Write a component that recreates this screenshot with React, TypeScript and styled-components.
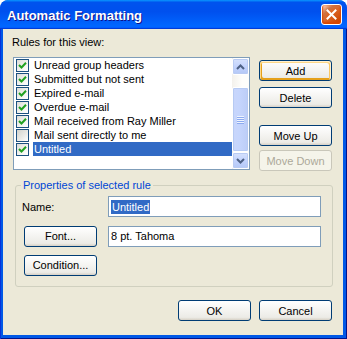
import React from 'react';
import styled, { createGlobalStyle, css } from 'styled-components';

const Global = createGlobalStyle`
  html, body { margin: 0; padding: 0; background: #ffffff; }
  body { font-family: "Liberation Sans", Arial, sans-serif; font-size: 11px; }
  * { box-sizing: border-box; }
`;

const Window = styled.div`
  width: 347px;
  height: 339px;
  display: flex;
  flex-direction: column;
  background: #0058e6;
  border-radius: 8px 8px 0 0;
  overflow: hidden;
`;

const TitleBar = styled.div`
  height: 29px;
  flex: none;
  display: flex;
  align-items: center;
  justify-content: space-between;
  padding: 0 5px 0 7px;
  border-radius: 8px 8px 0 0;
  background: linear-gradient(180deg, #0997ff, #0053ee 8%, #0050ee 40%, #0066ff 88%, #0066ff 93%, #005bff 95%, #003dd7 96%, #003dd7);
`;

const Title = styled.span`
  font-family: "Liberation Sans", Arial, sans-serif;
  font-weight: bold;
  font-size: 13px;
  color: #ffffff;
  text-shadow: 1px 1px #0f1089;
  letter-spacing: 0;
  padding-top: 1px;
`;

const CloseButton = styled.div`
  width: 21px;
  height: 21px;
  border: 1px solid #ffffff;
  border-radius: 3px;
  display: flex;
  align-items: center;
  justify-content: center;
  background: radial-gradient(circle at 90% 90%, #cc4600 0, #dc6527 55%, #cd7546 70%, #ffccb2 90%, #ffffff 100%);
  box-shadow: inset 0 -1px 2px 1px #da4600;
`;

const Frame = styled.div`
  flex: 1;
  display: flex;
  padding: 0 4px 4px 3px;
  box-shadow: inset 1px 0 #0831d9, inset -1px 0 #00138c, inset 0 -1px #00138c;
`;

const Client = styled.div`
  flex: 1;
  background: #ece9d8;
  display: flex;
  flex-direction: column;
  padding: 7px 11px 0 10px;
  color: #000000;
`;

const Label = styled.div`
  height: 13px;
  line-height: 13px;
  margin-left: -1px;
`;

const TopRow = styled.div`
  margin-top: 8px;
  display: flex;
  gap: 9px;
  height: 113px;
`;

const ListBox = styled.div`
  width: 237px;
  height: 113px;
  border: 1px solid #7f9db9;
  background: #ffffff;
  display: flex;
`;

const Items = styled.div`
  flex: 1;
  display: flex;
  flex-direction: column;
  padding: 0 0 0 2px;
`;

const Row = styled.div`
  height: 14px;
  display: flex;
  align-items: center;
  gap: 4px;
`;

const Check = styled.div<{ $checked: boolean }>`
  width: 13px;
  height: 13px;
  flex: none;
  border: 1px solid #1c5180;
  display: flex;
  align-items: center;
  justify-content: center;
  background: ${(p) =>
    p.$checked
      ? 'linear-gradient(135deg, #dcdcd7 0%, #f4f4f0 60%, #ffffff 100%)'
      : 'linear-gradient(135deg, #d2d2cc 0%, #ecece8 60%, #ffffff 100%)'};
`;

const ItemText = styled.span<{ $selected: boolean }>`
  flex: 1;
  height: 14px;
  line-height: 14px;
  padding: 0 1px;
  white-space: nowrap;
  ${(p) =>
    p.$selected &&
    css`
      background: #316ac5;
      color: #ffffff;
    `}
`;

const ScrollBar = styled.div`
  width: 17px;
  flex: none;
  display: flex;
  flex-direction: column;
  background: linear-gradient(90deg, #f3f1ec, #fefefb 60%, #fefefb);
`;

const ScrollButton = styled.div`
  width: 17px;
  height: 17px;
  border: 1px solid #ffffff;
  border-radius: 2px;
  background: linear-gradient(180deg, #d6e2fd, #c3d3fd 50%, #b4c8f6);
  box-shadow: inset 0 0 0 1px #b9cbf3;
  display: flex;
  align-items: center;
  justify-content: center;
`;

const Track = styled.div`
  flex: 1;
  display: flex;
  flex-direction: column;
  padding-top: 12px;
`;

const Thumb = styled.div`
  height: 65px;
  border: 1px solid #ffffff;
  border-radius: 2px;
  background: linear-gradient(90deg, #c8d6fb, #c5d5fd 40%, #bccdf7);
  box-shadow: inset 0 0 0 1px #b6caf3;
  display: flex;
  flex-direction: column;
  align-items: center;
  justify-content: center;
  gap: 1px;
`;

const Grip = styled.div`
  width: 7px;
  height: 1px;
  background: #eef4fe;
  box-shadow: 0 1px #8caaf0;
`;

const ButtonColumn = styled.div`
  width: 73px;
  display: flex;
  flex-direction: column;
  padding-top: 3px;
`;

const Button = styled.div<{ $default?: boolean; $disabled?: boolean; $gap?: number }>`
  width: 73px;
  height: 21px;
  flex: none;
  margin-top: ${(p) => p.$gap ?? 0}px;
  border: 1px solid #003c74;
  border-radius: 3px;
  display: flex;
  align-items: center;
  justify-content: center;
  color: #000000;
  background: linear-gradient(180deg, #ffffff, #ecebe6 86%, #d6d0c5);
  ${(p) =>
    p.$default &&
    css`
      box-shadow: inset -1px 1px #fff0cf, inset 1px 2px #fdd889, inset -2px 2px #fbc761, inset 2px -2px #e5a01a;
    `}
  ${(p) =>
    p.$disabled &&
    css`
      border-color: #c9c7ba;
      color: #aca899;
      background: #f5f4ea;
    `}
`;

const Group = styled.div`
  position: relative;
  margin: 15px -1px 0 2px;
  border: 1px solid #d0d0bf;
  border-radius: 3px;
  padding: 10px 11px 11px 8px;
  display: grid;
  grid-template-columns: 84px 213px;
  grid-template-rows: 21px 22px 20px;
  row-gap: 8px;
  align-items: center;
`;

const Legend = styled.span`
  position: absolute;
  top: -7px;
  left: 5px;
  padding: 0 2px;
  line-height: 13px;
  background: #ece9d8;
  color: #0046d5;
`;

const FieldLabel = styled.span`
  margin-left: -2px;
`;

const Input = styled.div`
  height: 21px;
  border: 1px solid #7f9db9;
  background: #ffffff;
  display: flex;
  align-items: center;
  padding-left: 2px;
  white-space: nowrap;
`;

const Selection = styled.span`
  background: #316ac5;
  color: #ffffff;
  line-height: 14px;
  padding: 0 1px;
`;

const Footer = styled.div`
  margin-top: 13px;
  display: flex;
  justify-content: flex-end;
  gap: 8px;
`;

const rules = [
  { label: 'Unread group headers', checked: true },
  { label: 'Submitted but not sent', checked: true },
  { label: 'Expired e-mail', checked: true },
  { label: 'Overdue e-mail', checked: true },
  { label: 'Mail received from Ray Miller', checked: true },
  { label: 'Mail sent directly to me', checked: false },
  { label: 'Untitled', checked: true, selected: true },
];

const CheckMark = () => (
  <svg width="9" height="9" viewBox="0 0 9 9">
    <path d="M1 4 L3.5 6.5 L8 1.8" fill="none" stroke="#21a121" strokeWidth="2" />
  </svg>
);

const Arrow = ({ up }: { up?: boolean }) => (
  <svg width="9" height="6" viewBox="0 0 9 6">
    <path d={up ? 'M1 5 L4.5 1.5 L8 5' : 'M1 1 L4.5 4.5 L8 1'} fill="none" stroke="#4d6185" strokeWidth="2" />
  </svg>
);

export default function App() {
  return (
    <>
      <Global />
      <Window>
        <TitleBar>
          <Title>Automatic Formatting</Title>
          <CloseButton>
            <svg width="11" height="11" viewBox="0 0 11 11">
              <path d="M1.5 1.5 L9.5 9.5 M9.5 1.5 L1.5 9.5" stroke="#ffffff" strokeWidth="2" strokeLinecap="square" />
            </svg>
          </CloseButton>
        </TitleBar>
        <Frame>
          <Client>
            <Label>Rules for this view:</Label>
            <TopRow>
              <ListBox>
                <Items>
                  {rules.map((r) => (
                    <Row key={r.label}>
                      <Check $checked={r.checked}>{r.checked && <CheckMark />}</Check>
                      <ItemText $selected={!!r.selected}>{r.label}</ItemText>
                    </Row>
                  ))}
                </Items>
                <ScrollBar>
                  <ScrollButton>
                    <Arrow up />
                  </ScrollButton>
                  <Track>
                    <Thumb>
                      <Grip />
                      <Grip />
                      <Grip />
                      <Grip />
                    </Thumb>
                  </Track>
                  <ScrollButton>
                    <Arrow />
                  </ScrollButton>
                </ScrollBar>
              </ListBox>
              <ButtonColumn>
                <Button $default>Add</Button>
                <Button $gap={6}>Delete</Button>
                <Button $gap={17}>Move Up</Button>
                <Button $gap={4} $disabled>
                  Move Down
                </Button>
              </ButtonColumn>
            </TopRow>
            <Group>
              <Legend>Properties of selected rule</Legend>
              <FieldLabel>Name:</FieldLabel>
              <Input>
                <Selection>Untitled</Selection>
              </Input>
              <Button>Font...</Button>
              <Input>8 pt. Tahoma</Input>
              <Button>Condition...</Button>
            </Group>
            <Footer>
              <Button>OK</Button>
              <Button>Cancel</Button>
            </Footer>
          </Client>
        </Frame>
      </Window>
    </>
  );
}
